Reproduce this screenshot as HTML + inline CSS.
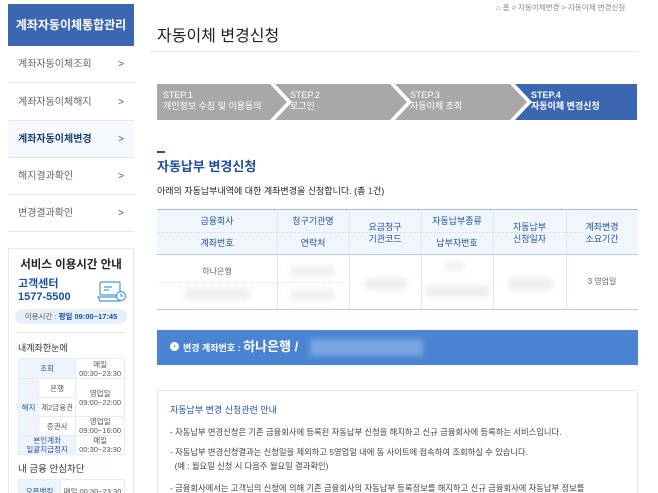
<!DOCTYPE html>
<html><head><meta charset="utf-8"><style>
*{margin:0;padding:0;box-sizing:border-box}
html,body{width:658px;height:493px;overflow:hidden}
body{background:#fff;font-family:"Liberation Sans","Noto Sans CJK KR",sans-serif;color:#333}
#w{position:relative;width:658px;height:493px;overflow:hidden}
.a{position:absolute}
.menu{left:8px;width:126px;height:37px;border-bottom:1px solid #e4e4e4;font-size:10px;color:#666;line-height:37px;padding-left:10px}
.menu b{position:absolute;right:10px;top:0;font-weight:normal;color:#555}
.st{top:84px;height:36px;color:#fff;font-size:9px;line-height:11px;padding:6px 0 0 0}
.cell{position:absolute;display:flex;align-items:center;justify-content:center;text-align:center;font-size:9px;line-height:12px}
.blur{position:absolute;background:#eee;filter:blur(3px);border-radius:3px}
.t td{border:1px solid #e6ecf5;text-align:center;font-size:7.5px;line-height:9px;color:#555}
.t .h{background:#eef4fc;color:#1f4fa0}
</style></head><body><div id="w">
<div class="a" style="left:8px;top:4px;width:126px;height:42px;background:#3b66b1;color:#fff;font-size:12px;font-weight:bold;line-height:42px;text-align:center">계좌자동이체통합관리</div>
<div class="a menu" style="top:46px">계좌자동이체조회<b>&gt;</b></div>
<div class="a menu" style="top:84px">계좌자동이체해지<b>&gt;</b></div>
<div class="a menu" style="top:121px;background:#f5f8fd;color:#1b3d7a;font-weight:bold">계좌자동이체변경<b>&gt;</b></div>
<div class="a menu" style="top:158px">해지결과확인<b>&gt;</b></div>
<div class="a menu" style="top:195px">변경결과확인<b>&gt;</b></div>

<div class="a" style="left:8px;top:248px;width:126px;height:300px;border:1px solid #e3e8ef"></div>
<div class="a" style="left:8px;top:256px;width:126px;text-align:center;font-size:11.5px;font-weight:bold;color:#222">서비스 이용시간 안내</div>
<div class="a" style="left:18px;top:278px;font-size:11px;font-weight:bold;color:#1f4fa0;line-height:13px">고객센터<br>1577-5500</div>
<svg class="a" style="left:97px;top:281px" width="30" height="24" viewBox="0 0 30 24" fill="none" stroke="#4a9ad8" stroke-width="1.2"><rect x="3" y="1" width="20" height="13" rx="1"/><path d="M1 16h24l-2 4H3z"/><path d="M7 6h8M7 9h5"/><circle cx="24" cy="15" r="4.5" fill="#fff"/><path d="M24 12.5v2.5h2"/></svg>
<div class="a" style="left:15px;top:309px;width:112px;height:15px;border-radius:8px;background:#e6f0fb;font-size:7.5px;color:#555;line-height:15px;text-align:center">이용시간 : <b style="color:#1f4fa0">평일 09:00~17:45</b></div>
<div class="a" style="left:18px;top:332px;width:107px;border-top:1px solid #e3e3e3"></div>
<div class="a" style="left:18px;top:341px;font-size:9px;color:#333">내계좌한눈에</div>
<table class="t a" style="left:18px;top:358px;width:107px;border-collapse:collapse">
<tr style="height:20px"><td class="h" colspan="2">조회</td><td>매일<br>00:30~23:30</td></tr>
<tr style="height:19px"><td class="h" rowspan="3" style="width:20px">해지</td><td>은행</td><td rowspan="2">영업일<br>09:00~22:00</td></tr>
<tr style="height:19px"><td>제2금융권</td></tr>
<tr style="height:19px"><td>증권사</td><td>영업일<br>09:00~16:00</td></tr>
<tr style="height:18px"><td class="h" colspan="2">본인계좌<br>일괄지급정지</td><td>매일<br>00:30~23:30</td></tr>
</table>
<div class="a" style="left:18px;top:461px;font-size:9.5px;color:#333">내 금융 안심차단</div>
<table class="t a" style="left:18px;top:479px;width:107px;border-collapse:collapse"><tr style="height:24px"><td class="h" style="width:42px">오픈뱅킹</td><td>매일 00:30~23:30</td></tr></table>

<div class="a" style="left:496px;top:2px;font-size:7.5px;color:#888">&#8962; 홈 &gt; 자동이체변경 &gt; 자동이체 변경신청</div>
<div class="a" style="left:157px;top:22px;font-size:16px;color:#222">자동이체 변경신청</div>
<div class="a" style="left:150px;top:51px;width:488px;border-top:1px solid #e4e4e4"></div>

<svg class="a" style="left:157px;top:84px" width="480" height="36">
<polygon points="0,0 113,0 130,18 113,36 0,36" fill="#a8a8a8"/>
<polygon points="118,0 233,0 250,18 233,36 118,36 135,18" fill="#a8a8a8"/>
<polygon points="238,0 353,0 370,18 353,36 238,36 255,18" fill="#a8a8a8"/>
<polygon points="358,0 480,0 480,36 358,36 375,18" fill="#3b66b1"/>
</svg>
<div class="a st" style="left:163px">STEP.1<br>개인정보 수집 및 이용동의</div>
<div class="a st" style="left:290px">STEP.2<br>로그인</div>
<div class="a st" style="left:410px">STEP.3<br>자동이체 조회</div>
<div class="a st" style="left:531px;font-weight:bold">STEP.4<br>자동이체 변경신청</div>

<div class="a" style="left:157px;top:151px;width:8px;height:2px;background:#1f4fa0"></div>
<div class="a" style="left:157px;top:156px;font-size:13px;font-weight:bold;color:#1f4fa0">자동납부 변경신청</div>
<div class="a" style="left:157px;top:184px;font-size:9px;color:#222">아래의 자동납부내역에 대한 계좌변경을 신청합니다. (총 <span style="color:#e02020">1</span>건)</div>

<div class="a" style="left:157px;top:209px;width:481px;height:46px;background:#f1f6fd;border-top:1px solid #9fb9df;border-bottom:1px solid #b8cbe6"></div>
<div class="a" style="left:157px;top:309px;width:481px;border-top:1px solid #b8cbe6"></div>
<div class="a" style="left:157px;top:232px;width:425px;border-top:1px dotted #cfdcef"></div>
<div class="a" style="left:157px;top:282px;width:190px;border-top:1px dotted #e5e5e5"></div>
<div class="a" style="left:277px;top:209px;height:100px;border-left:1px solid #dde6f3"></div>
<div class="a" style="left:349px;top:209px;height:100px;border-left:1px solid #dde6f3"></div>
<div class="a" style="left:421px;top:209px;height:100px;border-left:1px solid #dde6f3"></div>
<div class="a" style="left:493px;top:209px;height:100px;border-left:1px solid #dde6f3"></div>
<div class="a" style="left:566px;top:209px;height:100px;border-left:1px solid #dde6f3"></div>
<div class="cell" style="left:157px;top:210px;width:120px;height:22px;color:#1f4fa0">금융회사</div>
<div class="cell" style="left:157px;top:232px;width:120px;height:22px;color:#1f4fa0">계좌번호</div>
<div class="cell" style="left:277px;top:210px;width:72px;height:22px;color:#1f4fa0">청구기관명</div>
<div class="cell" style="left:277px;top:232px;width:72px;height:22px;color:#1f4fa0">연락처</div>
<div class="cell" style="left:349px;top:210px;width:72px;height:45px;color:#1f4fa0">요금청구<br>기관코드</div>
<div class="cell" style="left:421px;top:210px;width:72px;height:22px;color:#1f4fa0">자동납부종류</div>
<div class="cell" style="left:421px;top:232px;width:72px;height:22px;color:#1f4fa0">납부자번호</div>
<div class="cell" style="left:493px;top:210px;width:73px;height:45px;color:#1f4fa0">자동납부<br>신청일자</div>
<div class="cell" style="left:566px;top:210px;width:72px;height:45px;color:#1f4fa0">계좌변경<br>소요기간</div>
<div class="cell" style="left:157px;top:262px;width:120px;height:20px;color:#666;font-size:8px">하나은행</div>
<div class="cell" style="left:566px;top:255px;width:72px;height:54px;color:#666;font-size:8px">3 영업일</div>
<div class="blur" style="left:185px;top:288px;width:65px;height:12px"></div>
<div class="blur" style="left:290px;top:266px;width:45px;height:10px"></div>
<div class="blur" style="left:290px;top:290px;width:45px;height:10px"></div>
<div class="blur" style="left:365px;top:278px;width:42px;height:12px"></div>
<div class="blur" style="left:445px;top:262px;width:20px;height:8px"></div>
<div class="blur" style="left:425px;top:285px;width:65px;height:12px"></div>
<div class="blur" style="left:508px;top:278px;width:45px;height:12px"></div>

<div class="a" style="left:157px;top:330px;width:481px;height:35px;background:#4a84d2"></div>
<div class="a" style="left:170px;top:342px;width:9px;height:9px;border-radius:50%;background:#fff;color:#4a84d2;font-size:7px;line-height:9px;text-align:center;font-weight:bold">›</div>
<div class="a" style="left:183px;top:338px;color:#fff;font-size:9px;font-weight:bold;line-height:18px">변경 계좌번호 : <span style="font-size:13px">하나은행 /</span></div>
<div class="a" style="left:310px;top:339px;width:113px;height:17px;background:#7aa6e0;filter:blur(3px)"></div>

<div class="a" style="left:157px;top:390px;width:481px;height:140px;border:1px solid #e4e8ee"></div>
<div class="a" style="left:170px;top:403px;font-size:9px;color:#1f4fa0">자동납부 변경 신청관련 안내</div>
<div class="a" style="left:170px;top:425px;font-size:8.3px;color:#444;line-height:14px">- 자동납부 변경신청은 기존 금융회사에 등록된 자동납부 신청을 해지하고 신규 금융회사에 등록하는 서비스입니다.</div>
<div class="a" style="left:170px;top:445px;font-size:8.3px;color:#444;line-height:14px">- 자동납부 변경신청결과는 신청일을 제외하고 5영업일 내에 동 사이트에 접속하여 조회하실 수 있습니다.<br>&nbsp;&nbsp;(예 : 월요일 신청 시 다음주 월요일 결과확인)</div>
<div class="a" style="left:170px;top:481px;font-size:8.3px;color:#444;line-height:14px;white-space:nowrap">- 금융회사에서는 고객님의 신청에 의해 기존 금융회사의 자동납부 등록정보를 해지하고 신규 금융회사에 자동납부 정보를</div>
</div></body></html>
